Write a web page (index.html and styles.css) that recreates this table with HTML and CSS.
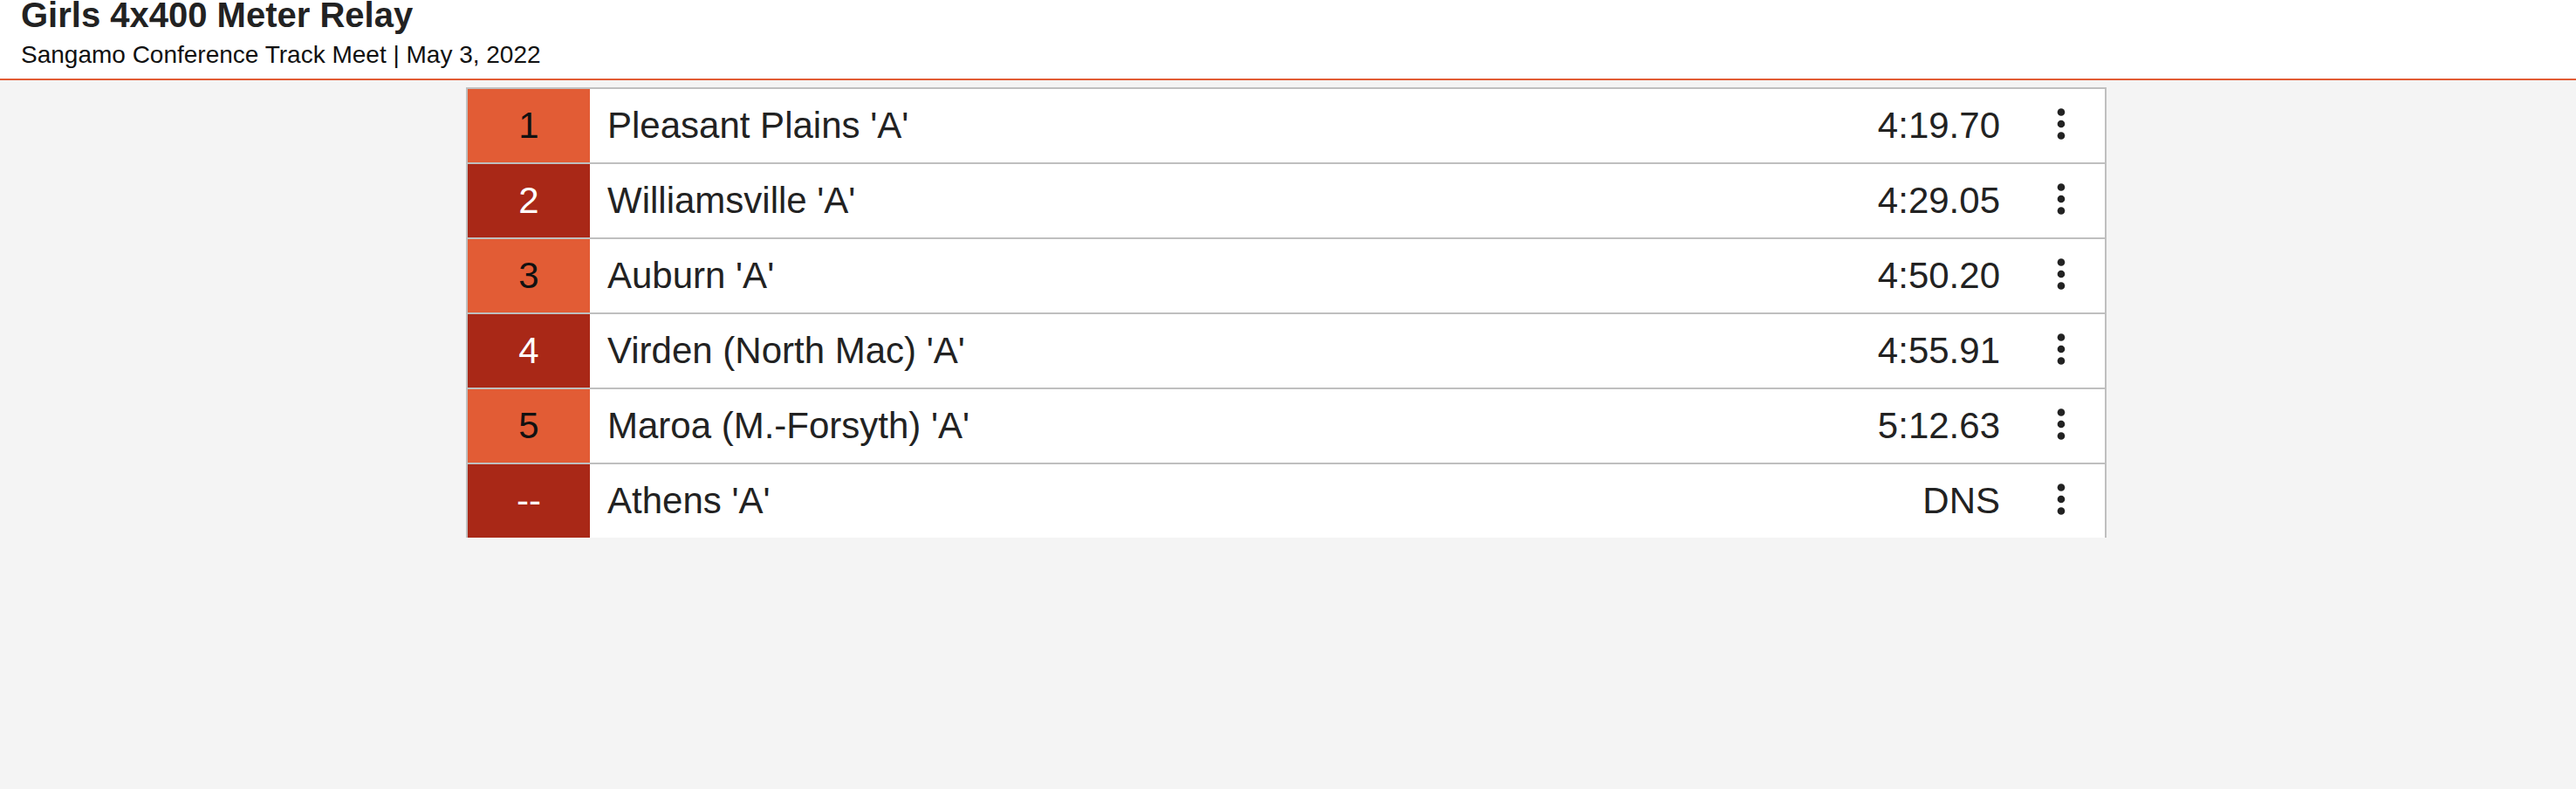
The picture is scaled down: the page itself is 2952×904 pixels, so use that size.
FILE: index.html
```html
<!DOCTYPE html>
<html lang="en">
<head>
  <meta charset="UTF-8">
  <meta name="viewport" content="width=device-width, initial-scale=1.0">
  <title>Girls 4x400 Meter Relay</title>
  <link rel="stylesheet" href="styles.css">
</head>
<body>

  <header class="event-head">
    <h1 class="event-title">Girls 4x400 Meter Relay</h1>
    <p class="event-meet">Sangamo Conference Track Meet | May 3, 2022</p>
  </header>

  <div class="results">
    <div class="row">
      <div class="place">1</div>
      <div class="team">Pleasant Plains 'A'</div>
      <div class="mark">4:19.70</div>
      <div class="more"><svg width="10" height="36" viewBox="0 0 10 36"><circle cx="5" cy="4.5" r="4.3"/><circle cx="5" cy="18" r="4.3"/><circle cx="5" cy="31.5" r="4.3"/></svg></div>
    </div>
    <div class="row">
      <div class="place">2</div>
      <div class="team">Williamsville 'A'</div>
      <div class="mark">4:29.05</div>
      <div class="more"><svg width="10" height="36" viewBox="0 0 10 36"><circle cx="5" cy="4.5" r="4.3"/><circle cx="5" cy="18" r="4.3"/><circle cx="5" cy="31.5" r="4.3"/></svg></div>
    </div>
    <div class="row">
      <div class="place">3</div>
      <div class="team">Auburn 'A'</div>
      <div class="mark">4:50.20</div>
      <div class="more"><svg width="10" height="36" viewBox="0 0 10 36"><circle cx="5" cy="4.5" r="4.3"/><circle cx="5" cy="18" r="4.3"/><circle cx="5" cy="31.5" r="4.3"/></svg></div>
    </div>
    <div class="row">
      <div class="place">4</div>
      <div class="team">Virden (North Mac) 'A'</div>
      <div class="mark">4:55.91</div>
      <div class="more"><svg width="10" height="36" viewBox="0 0 10 36"><circle cx="5" cy="4.5" r="4.3"/><circle cx="5" cy="18" r="4.3"/><circle cx="5" cy="31.5" r="4.3"/></svg></div>
    </div>
    <div class="row">
      <div class="place">5</div>
      <div class="team">Maroa (M.-Forsyth) 'A'</div>
      <div class="mark">5:12.63</div>
      <div class="more"><svg width="10" height="36" viewBox="0 0 10 36"><circle cx="5" cy="4.5" r="4.3"/><circle cx="5" cy="18" r="4.3"/><circle cx="5" cy="31.5" r="4.3"/></svg></div>
    </div>
    <div class="row">
      <div class="place">--</div>
      <div class="team">Athens 'A'</div>
      <div class="mark">DNS</div>
      <div class="more"><svg width="10" height="36" viewBox="0 0 10 36"><circle cx="5" cy="4.5" r="4.3"/><circle cx="5" cy="18" r="4.3"/><circle cx="5" cy="31.5" r="4.3"/></svg></div>
    </div>
  </div>

</body>
</html>
```

FILE: styles.css
```css
body {
    margin: 0;
    background-color: #f4f4f4;
    font-family: "Liberation Sans", Arial, sans-serif;
    color: #222;
}

.event-head {
    background-color: #fff;
    padding: 0 24px 6px;
    border-bottom: 2px solid #e25c35;
}

.event-title {
    margin: 0;
    font-size: 40px;
    line-height: 34px;
    font-weight: bold;
    color: #222;
}

.event-meet {
    margin: 8px 0 0;
    font-size: 28px;
    line-height: 42px;
    color: #111;
}

.results {
    box-sizing: border-box;
    width: 1880px;
    margin: 8px 0 0 calc(50% - 942px);
    background-color: #fff;
    border: 2px solid #bfbfbf;
    border-bottom: none;
}

.row {
    display: grid;
    grid-template-columns: 140px 1fr auto 100px;
    height: 84px;
    font-size: 42px;
}

.row + .row {
    border-top: 2px solid #bfbfbf;
}

.place {
    display: flex;
    align-items: center;
    justify-content: center;
    background-color: #e25c35;
    color: #111;
}

.row:nth-child(even) .place {
    background-color: #a92817;
    color: #fff;
}

.team {
    display: flex;
    align-items: center;
    padding-left: 20px;
}

.mark {
    display: flex;
    align-items: center;
    padding-right: 20px;
}

.more {
    display: flex;
    align-items: center;
    justify-content: center;
}

.more svg {
    fill: #222;
    margin-bottom: 5px;
}
```
